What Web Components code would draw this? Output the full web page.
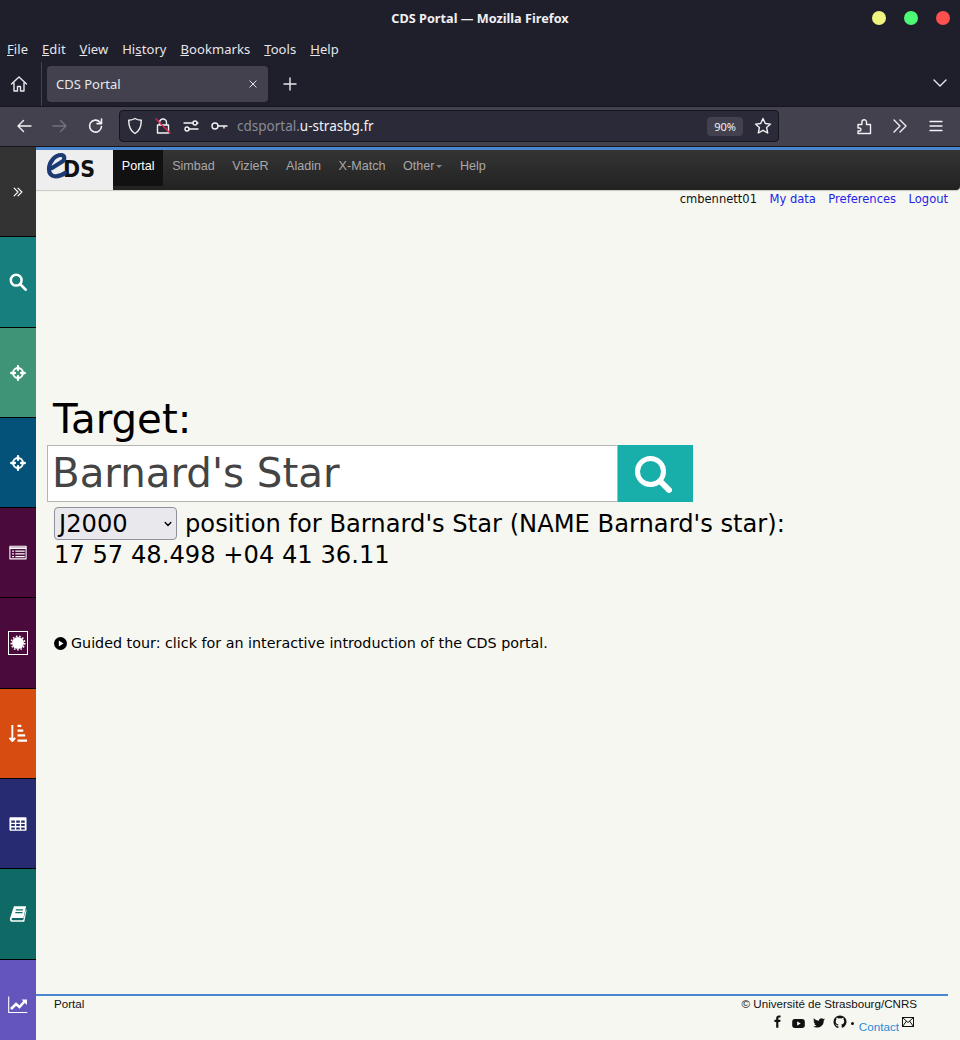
<!DOCTYPE html>
<html>
<head>
<meta charset="utf-8">
<title>CDS Portal</title>
<style>
  html, body { margin: 0; height: 1040px; overflow: hidden; background: #f7f7f2; }
  body { display: flex; flex-direction: column; font-family: "DejaVu Sans", sans-serif; }
</style>
</head>
<body>
<fx-titlebar>CDS Portal — Mozilla Firefox</fx-titlebar>
<fx-menubar><u>F</u>ile|<u>E</u>dit|<u>V</u>iew|Hi<u>s</u>tory|<u>B</u>ookmarks|<u>T</u>ools|<u>H</u>elp</fx-menubar>
<fx-tabbar>CDS Portal</fx-tabbar>
<fx-toolbar></fx-toolbar>
<portal-page>
  <cds-sidebar></cds-sidebar>
  <cds-navbar></cds-navbar>
  <user-bar></user-bar>
  <target-form></target-form>
  <portal-footer></portal-footer>
</portal-page>

<script>
const icon = (body, size = 20, extra = '') =>
  `<svg width="${size}" height="${size}" viewBox="0 0 20 20" fill="none" stroke="currentColor" stroke-width="1.4" stroke-linecap="round" stroke-linejoin="round" ${extra}>${body}</svg>`

const uiFont = '"Noto Sans", "Open Sans", sans-serif'

customElements.define('fx-titlebar',
class FxTitlebar extends HTMLElement {
  constructor() {
    super()
    this.attachShadow({ mode: 'open' })
    this.shadowRoot.innerHTML = `
      <style>
        :host { display: flex; align-items: center; justify-content: center; position: relative; height: 36px; background: #1f1f2b; color: #f0f0f3; font: bold 12.7px ${uiFont}; }
        .dots { position: absolute; right: 10px; top: 11px; display: flex; gap: 18px; }
        .dots i { width: 14px; height: 14px; border-radius: 50%; }
      </style>
      <slot></slot>
      <div class="dots">
        <i style="background:#eff47f"></i><i style="background:#4dfa75"></i><i style="background:#ff5050"></i>
      </div>
    `
  }
})

customElements.define('fx-menubar',
class FxMenubar extends HTMLElement {
  constructor() {
    super()
    this.attachShadow({ mode: 'open' })
    const items = this.innerHTML.split('|')
    this.innerHTML = ''
    this.shadowRoot.innerHTML = `
      <style>
        :host { display: flex; align-items: center; gap: 13.800px; height: 26px; padding-left: 7px; background: #1f1f2b; color: #e6e6ea; font: 13px ${uiFont}; letter-spacing: .1px; }
      </style>
      ${items.map(i => `<span>${i}</span>`).join('')}
    `
  }
})

customElements.define('fx-tabbar',
class FxTabbar extends HTMLElement {
  constructor() {
    super()
    this.attachShadow({ mode: 'open' })
    this.shadowRoot.innerHTML = `
      <style>
        :host { display: flex; align-items: center; height: 44px; background: #1f1f2b; color: #e8e8ec; font: 13px ${uiFont}; }
        .home { display: flex; align-items: center; justify-content: center; width: 42px; height: 44px; padding-right: 4px; border-right: 1px solid #44444e; box-sizing: border-box; }
        .tab { display: flex; align-items: center; justify-content: space-between; width: 221px; height: 36px; margin: 0 4px 0 5px; padding: 0 8px 0 9px; box-sizing: border-box; border-radius: 4px; background: #42414d; }
        .new { display: flex; margin-left: 8px; }
        .down { display: flex; margin: -2px 10px 0 auto; }
      </style>
      <div class="home">${icon('<path d="M2.500 10 10 3l7.500 7M5 8.500V17h3.500v-4.500h3V17H15V8.500"/>')}</div>
      <div class="tab">
        <span><slot></slot></span>
        ${icon('<path d="M5.500 5.500l9 9M14.500 5.500l-9 9"/>', 14)}
      </div>
      <div class="new">${icon('<path d="M10 4v12M4 10h12"/>')}</div>
      <div class="down">${icon('<path d="M4 7l6 6 6-6"/>')}</div>
    `
  }
})

customElements.define('fx-toolbar',
class FxToolbar extends HTMLElement {
  constructor() {
    super()
    this.attachShadow({ mode: 'open' })
    this.shadowRoot.innerHTML = `
      <style>
        :host { display: flex; align-items: center; height: 40px; box-sizing: border-box; padding-bottom: 1px; background: #42414d; border-top: 1px solid #15151c; color: #f2f2f5; font: 13px ${uiFont}; }
        .btn { display: flex; align-items: center; justify-content: center; width: 36px; }
        .url { display: flex; align-items: center; width: 660px; height: 32px; margin-left: 5px; box-sizing: border-box; padding-left: 5px; border: 1px solid #15151c; border-radius: 4px; background: #2a2a38; }
        .url .i { display: flex; margin-right: 8px; }
        .host { font-size: 13.500px; }
        .dim { color: #8b8b94; }
        .zoom { margin-left: auto; padding: 2px 7px; border-radius: 4px; background: #42414d; font-size: 11px; }
        .star { display: flex; margin: 0 5px 0 10px; }
        .end { display: flex; margin-left: auto; margin-right: 6px; }
      </style>
      <div class="btn" style="margin-left:6px">${icon('<path d="M17 10H4M9.500 4.500 4 10l5.500 5.500"/>')}</div>
      <div class="btn" style="color:#74747c">${icon('<path d="M3 10h13M10.500 4.500 16 10l-5.500 5.500"/>')}</div>
      <div class="btn">${icon('<path d="M15.500 10.500a6 6 0 1 1-1.600-4.500l1.600 1.600M15.500 3v4.600H11" stroke-width="1.600"/>')}</div>
      <div class="url">
        <span class="i">${icon('<path d="M10 2.500c2 1.200 4 1.700 6.300 1.800 0 5.700-1.500 10.500-6.300 13.200C5.200 14.800 3.700 10 3.700 4.300 6 4.200 8 3.700 10 2.500z"/>')}</span>
        <span class="i">${icon('<path d="M6.500 9V6.500a3.500 3.500 0 0 1 7 0V9M4.500 9h11v8h-11z"/><path d="M3 3l14 14" stroke="#e22850"/>')}</span>
        <span class="i">${icon('<circle cx="6" cy="13" r="2"/><circle cx="14" cy="7" r="2"/><path d="M3 7h9M16 7h1M8 13h9" />')}</span>
        <span class="i">${icon('<circle cx="6" cy="10" r="3"/><path d="M9 10h9M15 10v2"/>')}</span>
        <span class="host"><span class="dim">cdsportal.</span>u-strasbg.fr</span>
        <span class="zoom">90%</span>
        <span class="star">${icon('<path d="M10 2.500l2.300 5 5.200.6-3.900 3.500 1.100 5.400L10 14.300 5.300 17l1.100-5.400L2.500 8.100l5.200-.6z"/>')}</span>
      </div>
      <div class="end">
        <div class="btn">${icon('<path d="M7 17.500H16.500V8.500H12.500V6a2.300 2.300 0 0 0-4.600 0V8.500H4V12h1.500a1.500 1.500 0 0 1 0 3H4v2.500z"/>')}</div>
        <div class="btn">${icon('<path d="M4 4l6 6-6 6M10 4l6 6-6 6"/>')}</div>
        <div class="btn">${icon('<path d="M4 5.500h12M4 10h12M4 14.500h12"/>')}</div>
      </div>
    `
  }
})

customElements.define('portal-page',
class PortalPage extends HTMLElement {
  constructor() {
    super()
    this.attachShadow({ mode: 'open' })
    this.shadowRoot.innerHTML = `
      <style>
        :host { flex: 1; display: grid; grid-template-columns: 36px 1fr; grid-template-rows: auto auto 1fr auto; min-height: 0; background: #f7f7f2; border-top: 1px solid #15151c; }
        ::slotted(cds-sidebar) { grid-row: 1 / 5; }
      </style>
      <slot></slot>
    `
  }
})

customElements.define('cds-sidebar',
class CdsSidebar extends HTMLElement {
  constructor() {
    super()
    this.attachShadow({ mode: 'open' })
    const solid = 'fill="currentColor" stroke="none"'
    const target = '<circle cx="10" cy="10" r="5.500" stroke-width="2.200"/><path d="M10 2.500v4M10 13.500v4M2.500 10h4M13.500 10h4" stroke-width="2.600"/>'
    const items = [
      ['#333333', 90, '<path d="M4.500 4.500 10 10l-5.500 5.500M10 4.500l5.500 5.500L10 15.500" stroke-width="1.700"/>', 14],
      ['#17807f', 91, '<circle cx="8" cy="8" r="6" stroke-width="2.800"/><path d="M12.500 12.500l6 6" stroke-width="3"/>', 18],
      ['#3f9377', 90, target, 18],
      ['#04527a', 90, target, 18],
      ['#4a0a3c', 90, '<rect x="1" y="2.500" width="18" height="14" stroke-width="1.200"/><path d="M1.500 4.500h17" stroke-width="2"/><path d="M3.500 8h2M7 8h10.500M3.500 11h2M7 11h10.500M3.500 14h2M7 14h10.500" stroke-width="1.300" stroke-linecap="butt"/>', 18],
      ['#4a0a3c', 91, '<rect x=".5" y=".5" width="19" height="23" stroke-width="1"/><circle cx="10" cy="12" r="6" fill="currentColor" stroke="none"/><circle cx="10" cy="12" r="6.800" stroke-width="1.500" stroke-dasharray="1.600 1.700"/>', 0],
      ['#d74c11', 90, '<path d="M3.500 1v16.500M.5 14.500l3 3.500 3-3.500" stroke-width="2" stroke-linecap="butt"/><path d="M9 2h4M9 7h6M9 12h8M9 17.500h10" stroke-width="2.200" stroke-linecap="butt"/>', 19],
      ['#262b72', 90, `<path ${solid} fill-rule="evenodd" d="M1.500 2.500h17a1 1 0 0 1 1 1v13a1 1 0 0 1-1 1h-17a1 1 0 0 1-1-1v-13a1 1 0 0 1 1-1zm1 3.500v2.500h4V6zm5.500 0v2.500h4V6zm5.500 0v2.500h4V6zM2.500 10v2.300h4V10zm5.500 0v2.300h4V10zm5.500 0v2.300h4V10zM2.500 13.800V16h4v-2.200zm5.500 0V16h4v-2.200zm5.500 0V16h4v-2.200z"/>`, 18],
      ['#0f6a66', 91, `<path ${solid} d="M5.500 1.500h13.500l-3 13H4c-1.500 0-1.500 2.500 0 2.500h11.500l.5-.9 2.800-11 .7.500L17 18.500H3.500C1 18.500.5 16 1.500 13.500z"/><path d="M7.500 5.500h8M7 8.500h8" stroke="#0f6a66" stroke-width="1.300" stroke-linecap="butt"/>`, 18],
      ['#6455bd', 80, `<path d="M.7 1.500v16h18.600" stroke-width="1.100" stroke-linecap="butt"/><path d="M3 14l5-5 3.500 3 5-5.500" stroke-width="2.600" stroke-linecap="butt" stroke-linejoin="miter"/><path ${solid} d="M13.500 4.500H19v5.500z"/>`, 20]
    ]
    this.shadowRoot.innerHTML = `
      <style>
        :host { display: flex; flex-direction: column; color: #fff; }
        div { display: flex; align-items: center; justify-content: center; box-sizing: border-box; border-bottom: 1px solid #000; }
        div:last-child { border-bottom: 0; flex: 1; padding-top: 9px; }
      </style>
      ${items.map(([bg, h, path, size]) => `<div style="background:${bg};height:${h}px">${size
        ? icon(path, size, 'stroke-linecap="butt"')
        : `<svg width="20" height="24" viewBox="0 0 20 24" fill="none" stroke="currentColor">${path}</svg>`}</div>`).join('')}
    `
  }
})

customElements.define('cds-navbar',
class CdsNavbar extends HTMLElement {
  constructor() {
    super()
    this.attachShadow({ mode: 'open' })
    this.shadowRoot.innerHTML = `
      <style>
        :host { display: flex; height: 43px; box-sizing: border-box; border-top: 3px solid #4a86d0; border-bottom-right-radius: 4px; background: linear-gradient(#343434, #222); box-shadow: 0 1px 1px rgba(0,0,0,.2); font: 12.6px "Liberation Sans", Arial, sans-serif; color: #a8a8a8; }
        .logo { display: block; width: 77px; background: #eeeeee; flex: none; }
        nav { display: flex; align-items: flex-start; }
        a { display: block; height: 36px; line-height: 32px; padding: 0 8.750px; }
        a.on { color: #fff; background: #111; }
        .caret { display: inline-block; margin-left: 2px; vertical-align: middle; border: 3px solid transparent; border-top-color: #888; border-bottom: 0; }
      </style>
      <div class="logo">
        <svg width="77" height="40" viewBox="0 0 77 40">
          <text x="27" y="27" font-family="'DejaVu Sans', sans-serif" font-weight="bold" font-size="23" fill="#111" textLength="32" lengthAdjust="spacingAndGlyphs">DS</text>
          <path d="M16 18 27 11c2-2 2-6-2-6-6 0-12 7-12 14 0 9 9 9 16 4" fill="none" stroke="#1d3a75" stroke-width="4.200" stroke-linecap="round"/>
        </svg>
      </div>
      <nav>
        <a class="on">Portal</a><a>Simbad</a><a>VizieR</a><a>Aladin</a><a>X-Match</a><a>Other<span class="caret"></span></a><a>Help</a>
      </nav>
    `
  }
})

customElements.define('user-bar',
class UserBar extends HTMLElement {
  constructor() {
    super()
    this.attachShadow({ mode: 'open' })
    this.shadowRoot.innerHTML = `
      <style>
        :host { display: flex; justify-content: flex-end; gap: 12.500px; padding: 2px 12px 0 0; font-size: 11.520px; line-height: 15px; color: #111; }
        a { color: #2323e6; }
      </style>
      <span>cmbennett01</span><a>My data</a><a>Preferences</a><a>Logout</a>
    `
  }
})

customElements.define('target-form',
class TargetForm extends HTMLElement {
  constructor() {
    super()
    this.attachShadow({ mode: 'open' })
    this.shadowRoot.innerHTML = `
      <style>
        :host { display: block; padding: 189px 0 0 18px; color: #000; }
        h1 { margin: 0 0 1px -1px; font-weight: normal; font-size: 40.320px; line-height: 48px; }
        .search { display: flex; margin: 0 0 0 -7px; width: 646px; height: 57px; }
        .box { flex: 1; box-sizing: border-box; padding-left: 4px; border: 1px solid #b4b4b4; background: #fff; color: #444; font-size: 40.320px; line-height: 55px; outline: 0; }
        button { display: flex; align-items: center; justify-content: center; width: 75px; border: 0; padding: 0 6px 0 0; background: #18aea9; color: #fff; }
        .line { font-size: 24.190px; line-height: 30px; }
        .first { display: flex; align-items: center; gap: 8px; margin-top: 5px; height: 33px; }
        .select { display: flex; align-items: center; justify-content: space-between; box-sizing: border-box; width: 123px; height: 33px; padding: 0 1px 0 4px; border: 1px solid #8f8f9d; border-radius: 4px; background: #e9e9ed; }
        .tour { display: flex; align-items: center; gap: 4px; margin-top: 64px; font-size: 14.310px; line-height: 18px; }
      </style>
      <h1>Target:</h1>
      <div class="search">
        <div class="box" contenteditable="true" spellcheck="false">Barnard's Star</div>
        <button>
          <svg width="38" height="38" viewBox="0 0 38 38" fill="none" stroke="#fff" stroke-linecap="round"><circle cx="16.500" cy="16.500" r="13" stroke-width="5"/><path d="M27 27l8 8" stroke-width="6"/></svg>
        </button>
      </div>
      <div class="line first">
        <div class="select"><span>J2000</span>${icon('<path d="M6 8 10 12l4-4" stroke-width="2"/>', 14)}</div>
        <span>position for Barnard's Star (NAME Barnard's star):</span>
      </div>
      <div class="line">17 57 48.498 +04 41 36.11</div>
      <div class="tour">
        <svg width="13" height="13" viewBox="0 0 13 13"><circle cx="6.500" cy="6.500" r="6.500" fill="#000"/><path d="M4.800 3.500 9.500 6.500l-4.700 3z" fill="#fff"/></svg>
        <span>Guided tour: click for an interactive introduction of the CDS portal.</span>
      </div>
    `
  }
})

customElements.define('portal-footer',
class PortalFooter extends HTMLElement {
  constructor() {
    super()
    this.attachShadow({ mode: 'open' })
    this.shadowRoot.innerHTML = `
      <style>
        :host { display: flex; justify-content: space-between; height: 46px; margin-right: 12px; padding: 0 31px 0 18px; box-sizing: border-box; border-top: 2px solid #4a86d0; font: 11.600px/15px "Liberation Sans", Arial, sans-serif; color: #111; }
        .right { display: flex; flex-direction: column; align-items: flex-end; gap: 2px; }
        .icons { display: flex; align-items: center; gap: 8px; margin-right: 3px; height: 20px; }
        a { color: #2a8bd8; margin: 6px -5px 0 0; font-size: 11.700px; }
        .dot { width: 3px; height: 3px; border-radius: 50%; background: #111; margin: 0 -3px 0 -3px; }
        .up { margin-top: -3px; }
      </style>
      <span>Portal</span>
      <div class="right">
        <span>© Université de Strasbourg/CNRS</span>
        <div class="icons">
          <svg class="up" width="7" height="13" viewBox="0 0 8 14"><path d="M2.500 14V7.500H.5V5h2V3.200C2.500 1 3.700 0 5.500 0H7.500v2.400H6.200c-.9 0-1.200.4-1.200 1.100V5h2.500l-.4 2.500H5V14z" fill="#111"/></svg>
          <svg style="margin-left:3px" width="13" height="9" viewBox="0 0 14 10"><rect width="14" height="10" rx="3" fill="#111"/><path d="M5.500 2.800 9.500 5l-4 2.200z" fill="#fff"/></svg>
          <svg width="12" height="10" viewBox="0 0 13 11"><path d="M13 1.500c-.5.200-1 .4-1.500.4.500-.3 1-.8 1.200-1.400-.5.300-1 .5-1.700.6A2.700 2.700 0 0 0 6.400 3C4.200 2.900 2.200 1.900.9.300.2 1.500.6 3 1.700 3.800c-.4 0-.8-.1-1.200-.3 0 1.300.9 2.400 2.100 2.700-.4.100-.8.100-1.200 0 .3 1 1.300 1.800 2.500 1.900C2.800 9.100 1.400 9.600 0 9.400 3.900 11.900 12 10 11.700 2.800c.5-.3 1-.8 1.300-1.300z" fill="#111"/></svg>
          <svg class="up" style="margin-right:-1px" width="14" height="14" viewBox="0 0 14 14"><path d="M7 .5C3.300.5.500 3.300.5 6.900c0 2.900 1.800 5.300 4.400 6.200.4 0 .5-.1.500-.3v-1.500c-1.600.3-2-.4-2.200-.8-.1-.2-.4-.8-.7-.9-.2-.1-.5-.4 0-.4s.8.400.9.600c.6 1 1.500.7 1.900.5 0-.4.200-.7.400-.9-1.500-.2-3-.7-3-3.200 0-.7.300-1.300.7-1.800-.1-.2-.3-.8.1-1.700 0 0 .5-.2 1.800.7a6 6 0 0 1 3.300 0C9.900 2.500 10.400 2.700 10.400 2.700c.4.900.1 1.500.1 1.700.4.500.7 1 .7 1.800 0 2.500-1.500 3-3 3.200.3.200.5.600.5 1.200v1.900c0 .2.100.3.500.3 2.500-.9 4.300-3.300 4.300-6.100C13.500 3.300 10.700.5 7 .5z" fill="#111"/></svg>
          <i class="dot"></i>
          <a>Contact</a>
          <svg class="up" width="12" height="10" viewBox="0 0 12 10" fill="none" stroke="#111"><rect x=".5" y=".5" width="11" height="9"/><path d="M.5.5 6 5.500 11.500.5M.5 9.500 4.500 4M11.500 9.500 7.500 4"/></svg>
        </div>
      </div>
    `
  }
})
</script>
</body>
</html>
